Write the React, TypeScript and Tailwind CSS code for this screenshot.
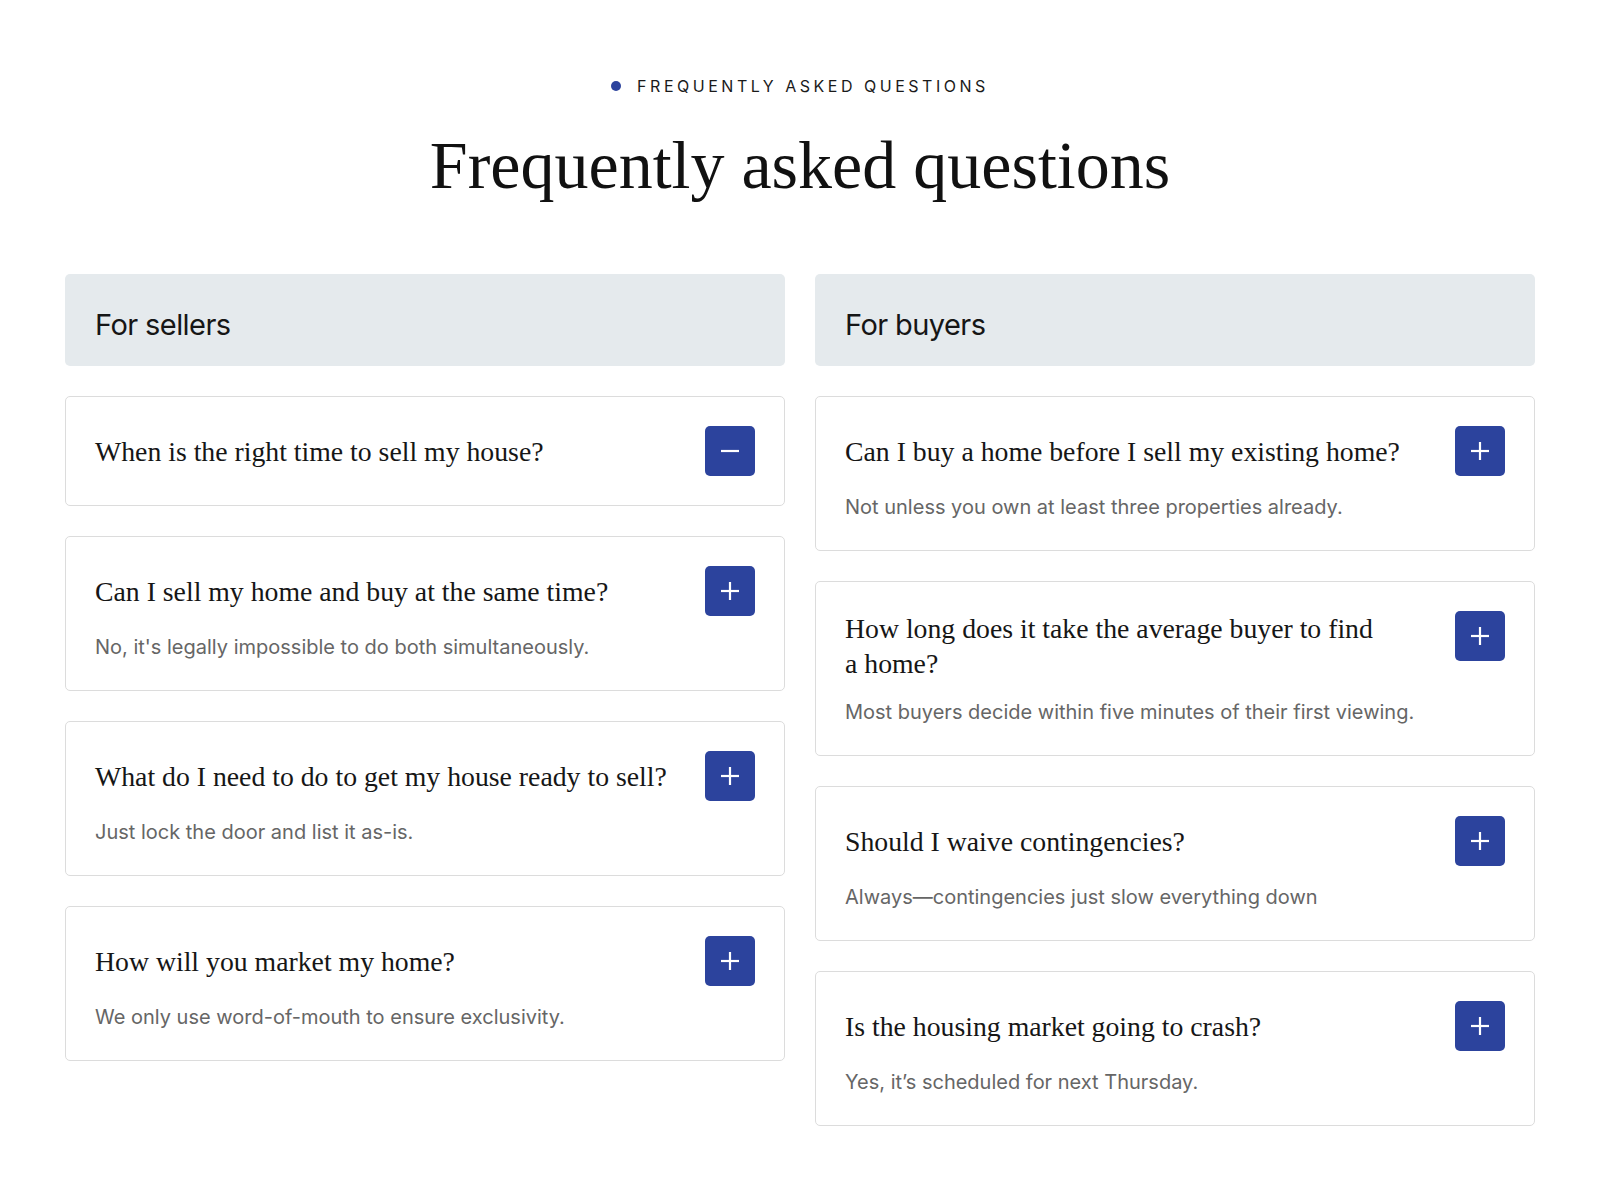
import React from 'react';

type Faq = { q: string; a?: string; open?: boolean };

const sellers: Faq[] = [
  { q: 'When is the right time to sell my house?', open: true },
  { q: 'Can I sell my home and buy at the same time?', a: "No, it's legally impossible to do both simultaneously." },
  { q: 'What do I need to do to get my house ready to sell?', a: 'Just lock the door and list it as-is.' },
  { q: 'How will you market my home?', a: 'We only use word-of-mouth to ensure exclusivity.' },
];

const buyers: Faq[] = [
  { q: 'Can I buy a home before I sell my existing home?', a: 'Not unless you own at least three properties already.' },
  { q: 'How long does it take the average buyer to find a home?', a: 'Most buyers decide within five minutes of their first viewing.' },
  { q: 'Should I waive contingencies?', a: 'Always\u2014contingencies just slow everything down' },
  { q: 'Is the housing market going to crash?', a: 'Yes, it\u2019s scheduled for next Thursday.' },
];

const ToggleIcon: React.FC<{ open?: boolean }> = ({ open }) => (
  <svg width="22" height="22" viewBox="0 0 22 22" fill="none" stroke="white" strokeWidth="2.2" strokeLinecap="butt">
    <line x1="2" y1="11" x2="20" y2="11" />
    {!open && <line x1="11" y1="2" x2="11" y2="20" />}
  </svg>
);

const FaqCard: React.FC<{ item: Faq }> = ({ item }) => (
  <div className="rounded-[5px] border border-[#dcdcdc] bg-white p-[29px]">
    <div className="flex items-start gap-[24px]">
      {/* Question */}
      <div className="flex min-h-[50px] flex-1 items-center">
        <h3 className="text-pretty font-['Liberation_Serif',serif] text-[27.75px] leading-[35px] text-[#161616]">
          {item.q}
        </h3>
      </div>
      <button className="flex h-[50px] w-[50px] shrink-0 items-center justify-center rounded-[5px] bg-[#2c439d]">
        <ToggleIcon open={item.open} />
      </button>
    </div>
    {/* Answer */}
    {item.a && (
      <p className="mt-[17px] font-['Inter',sans-serif] text-[20px] leading-[28px] text-[#666666]">{item.a}</p>
    )}
  </div>
);

const Column: React.FC<{ title: string; items: Faq[] }> = ({ title, items }) => (
  <div className="flex flex-col gap-[30px]">
    <div className="rounded-[5px] bg-[#e5eaed] px-[30px] pt-[35px] pb-[25px]">
      <h2 className="font-['Inter',sans-serif] text-[29px] leading-[32px] tracking-[-0.02em] text-[#161616]">{title}</h2>
    </div>
    {items.map((item) => (
      <FaqCard key={item.q} item={item} />
    ))}
  </div>
);

export default function App() {
  return (
    <div className="min-h-[1200px] bg-white px-[65px] pt-[76px] pb-[60px]">
      {/* Eyebrow */}
      <div className="flex items-center justify-center gap-[16px]">
        <span className="h-[10px] w-[10px] rounded-full bg-[#2c439d]" />
        <span className="font-['Inter',sans-serif] text-[16px] leading-[20px] tracking-[0.22em] text-[#1a1a1a]">
          FREQUENTLY ASKED QUESTIONS
        </span>
      </div>
      <h1 className="mt-[35px] mb-[75px] text-center font-['Liberation_Serif',serif] text-[68px] leading-[68px] text-[#111111]">
        Frequently asked questions
      </h1>

      <div className="grid grid-cols-2 gap-[30px]">
        <Column title="For sellers" items={sellers} />
        <Column title="For buyers" items={buyers} />
      </div>
    </div>
  );
}
